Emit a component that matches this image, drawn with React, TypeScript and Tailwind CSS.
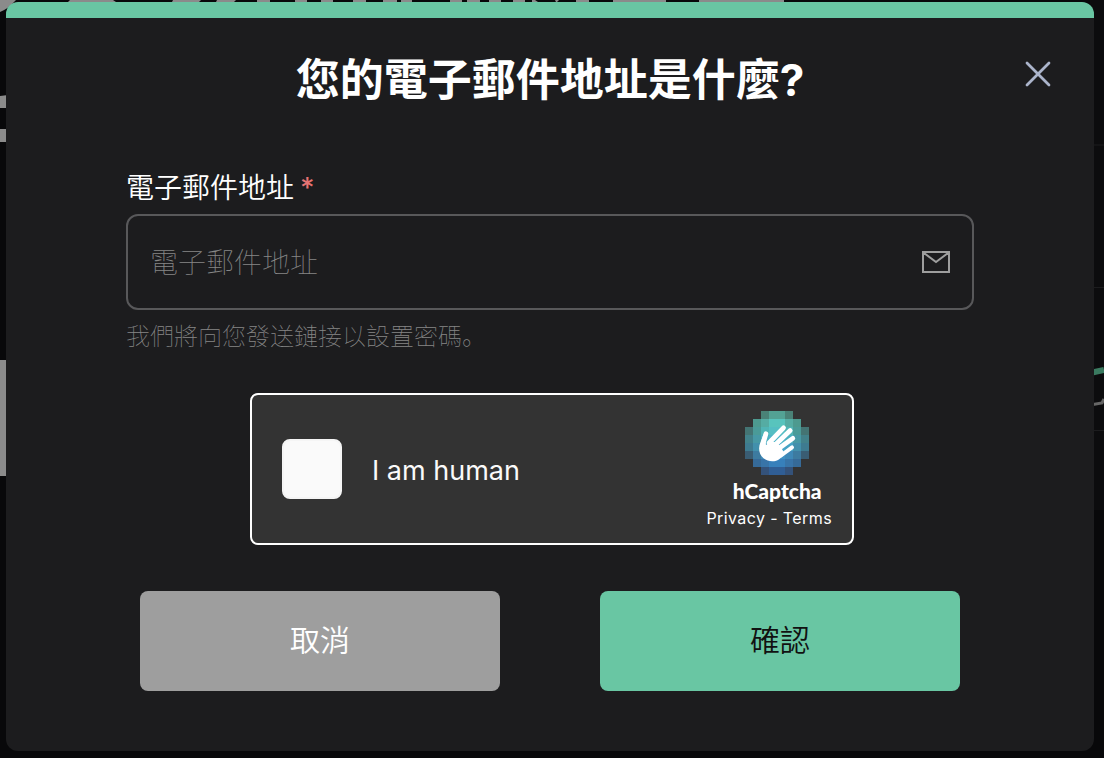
import { X } from "lucide-react";

const logoRows: { start: number; colors: string[] }[] = [
  { start: 2, colors: ["#4a8277", "#53a294", "#53a294", "#4a8277"] },
  { start: 1, colors: ["#4d9a8f", "#55aca3", "#58c4bd", "#58c4bd", "#55aca3", "#4d9a8f"] },
  { start: 0, colors: ["#447473", "#4a9b98", "#50b5b5", "#54bec3", "#54bec3", "#50b5b5", "#4a9b98", "#447473"] },
  { start: 0, colors: ["#42818a", "#4799a5", "#4bb0bf", "#4db5c8", "#4db5c8", "#4bb0bf", "#4799a5", "#42818a"] },
  { start: 0, colors: ["#3e7b90", "#4290ac", "#45a2c4", "#46a5ca", "#46a5ca", "#45a2c4", "#4290ac", "#3e7b90"] },
  { start: 0, colors: ["#3a5d73", "#3d7ba0", "#3e88b7", "#3f90c3", "#3f90c3", "#3e88b7", "#3d7ba0", "#3a5d73"] },
  { start: 1, colors: ["#366a98", "#3874a8", "#3780bb", "#3780bb", "#3874a8", "#366a98"] },
  { start: 2, colors: ["#34527a", "#305e95", "#305e95", "#34527a"] },
];

function CaptchaLogo() {
  return (
    <svg viewBox="0 0 64 64" className="size-16" aria-hidden="true">
      <g shapeRendering="crispEdges">
        {logoRows.map((row, y) =>
          row.colors.map((color, i) => (
            <rect key={`${y}-${i}`} x={(row.start + i) * 8} y={y * 8} width="8" height="8" fill={color} />
          )),
        )}
      </g>
      <path
        d="M18.6 23 L15.6 31 C12.8 37 14 43.5 18.5 47.3 C23.5 51.5 31 51 34.5 48 L40 43 L35 35 L31 31 L26 31 L21 34 Z"
        fill="#fff"
      />
      <g stroke="#fff" strokeWidth="4.8" strokeLinecap="round" fill="none">
        <path d="M20.9 22.8 L18 33" />
        <path d="M24 32 L38.5 16.8" />
        <path d="M29 35 L45.2 19.6" />
        <path d="M33 38 L47.8 27.4" />
        <path d="M36 44.5 L47 36.4" strokeWidth="4" />
      </g>
    </svg>
  );
}

function Backdrop() {
  return (
    <svg className="absolute left-0 top-0 h-full w-full" aria-hidden="true">
      <g fill="#8b8b8b">
        <path d="M0 0 H16 Q8 9 0 12 Z" />
        <path d="M70 0H113L116 2H68Z M173 0H201L199 2H172Z M217 0H236L234 2H216Z M257 0H270V2H257Z M295 0H307V2H295Z M321 0H333V2H321Z M353 0H366V2H353Z M383 0H397V2H383Z M401 0H412V2H401Z" />
        <path d="M450 0H462V2H450Z M467 0H480V2H467Z M489 0H501V2H489Z M513 0H525V2H513Z M532 0H535L538 2H532Z M555 0H559L557 2H556Z M576 0H589V2H576Z M613 0H666V2H613Z M699 0H784V2H699Z" />
        <path d="M0 96 L8 95 V108 H0Z M0 129 H8 V142 H0Z M0 360 H8 V476 H0Z" />
      </g>
      <path d="M1090 0H1104V510H1090Z" fill="#0c0c0e" />
      <path d="M1090 145H1104 M1090 287.500H1104 M1090 430.500H1104" stroke="#1c1c1e" />
      <path d="M1090 373 L1104 370" stroke="#3a7a60" strokeWidth="6" />
      <path d="M1090 405 L1102 403 L1104 399" stroke="#666" strokeWidth="3" fill="none" />
    </svg>
  );
}

export default function App() {
  return (
    <div className="relative min-h-screen bg-[#08080a] pt-[2px] pr-[10px] pb-[7px] pl-[6px] font-['Inter','Noto_Sans_CJK_TC',sans-serif] text-white">
      <Backdrop />
      <main
        role="dialog"
        aria-labelledby="dialog-title"
        className="relative overflow-hidden rounded-xl border-t-16 border-[#69c6a3] bg-[#1c1c1e] pb-15"
      >
        <header className="grid grid-cols-[80px_1fr_80px] items-center pt-[29px]">
          <h1 id="dialog-title" className="col-start-2 text-center text-[44px] leading-[66px] font-bold">
            您的電子郵件地址是什麼?
          </h1>
          <button type="button" aria-label="關閉" className="mb-3 ml-1 flex size-10 items-center justify-center text-[#abb4cb]">
            <X size={44} strokeWidth={1.5} className="shrink-0" />
          </button>
        </header>
        <form className="px-[120px] pt-[53px]" onSubmit={(e) => e.preventDefault()}>
          <label htmlFor="email" className="flex h-11 items-center gap-1.5 text-[28px] leading-10 font-[350]">
            電子郵件地址 <span className="font-medium text-[#e57373]">*</span>
          </label>
          <div className="mt-1 flex h-24 items-center rounded-xl border-2 border-[#58585a] px-[22px]">
            <input
              id="email"
              type="email"
              placeholder="電子郵件地址"
              className="h-full min-w-0 flex-1 bg-transparent pt-0.5 text-[28px] font-thin outline-none placeholder:text-[#868686]"
            />
            <svg viewBox="0 0 28 22" className="h-[22px] w-7" fill="none" stroke="#9e9e9e" strokeWidth="2" aria-hidden="true">
              <path d="M1 1H27V21H1Z M2 2L14 11L26 2" />
            </svg>
          </div>
          <p className="mt-2 font-['Noto_Sans_CJK_SC',sans-serif] text-2xl leading-[34px] font-thin text-[#868686]">
            我們將向您發送鏈接以設置密碼。
          </p>
          <div className="mt-[41px] flex justify-center pl-1">
            <div className="flex h-[152px] w-[604px] items-center rounded-lg border-2 border-white bg-[#333] pr-5 pl-[30px]">
              <input
                id="human"
                type="checkbox"
                className="size-15 appearance-none rounded-lg border-2 border-[#f5f5f5] bg-[#fafafa]"
              />
              <label htmlFor="human" className="flex-1 pt-1 pl-[30px] text-[27px] leading-10 text-[#fafafa]">
                I am human
              </label>
              <div className="flex flex-col items-center pt-[2px]">
                <div className="flex flex-col items-center pl-4">
                  <CaptchaLogo />
                  <span className="mt-1 font-['Lato',sans-serif] text-[21px] leading-6 font-black">hCaptcha</span>
                </div>
                <span className="mt-[3px] text-base leading-6 tracking-wide">
                  <a href="#privacy">Privacy</a> - <a href="#terms">Terms</a>
                </span>
              </div>
            </div>
          </div>
          <div className="mt-[46px] flex gap-[100px] px-[14px] text-[30px] font-[350]">
            <button type="button" className="h-[100px] flex-1 rounded-lg bg-[#9e9e9e] pb-0.5">
              取消
            </button>
            <button type="submit" className="h-[100px] flex-1 rounded-lg bg-[#69c6a3] pb-0.5 text-[#111]">
              確認
            </button>
          </div>
        </form>
      </main>
    </div>
  );
}
